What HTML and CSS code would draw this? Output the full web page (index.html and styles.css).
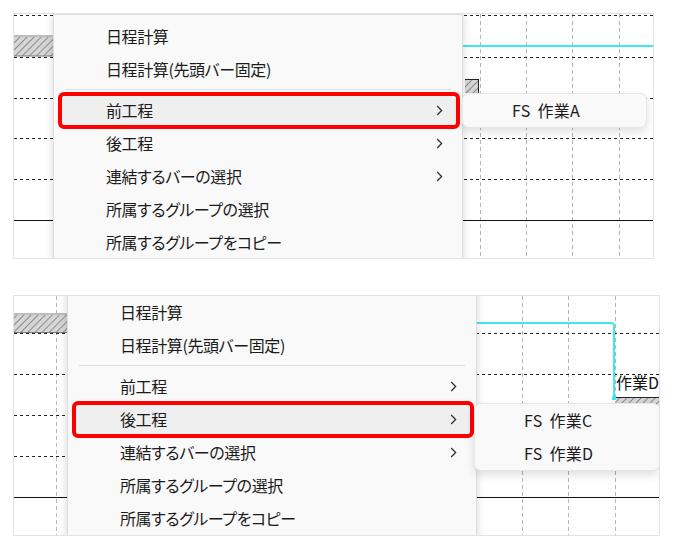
FILE: index.html
```html
<!DOCTYPE html>
<html lang="ja">
<head>
  <meta charset="UTF-8">
  <title>前工程・後工程メニュー</title>
  <link rel="stylesheet" href="styles.css">
</head>
<body>

  <!-- 1枚目: 前工程 -->
  <div class="shot shot-a">
    <svg class="chart" width="639" height="244">
      <defs>
        <pattern id="hatchA" width="5" height="5" patternUnits="userSpaceOnUse" patternTransform="rotate(45)">
          <rect width="5" height="5" fill="#d6d6d6"/>
          <line x1="0" y1="0" x2="0" y2="5" stroke="#444" stroke-width="1"/>
        </pattern>
      </defs>
      <g class="vgrid">
        <line x1="466.5" y1="0" x2="466.5" y2="244"/>
        <line x1="512.5" y1="0" x2="512.5" y2="244"/>
        <line x1="558.5" y1="0" x2="558.5" y2="244"/>
        <line x1="605.5" y1="0" x2="605.5" y2="244"/>
      </g>
      <g class="hgrid">
        <line x1="0" y1="1.5" x2="639" y2="1.5"/>
        <line x1="0" y1="43.5" x2="639" y2="43.5"/>
        <line x1="0" y1="84.5" x2="639" y2="84.5"/>
        <line x1="0" y1="124.5" x2="639" y2="124.5"/>
        <line x1="0" y1="165.5" x2="639" y2="165.5"/>
      </g>
      <line class="solid" x1="0" y1="206.5" x2="639" y2="206.5"/>
      <rect x="0" y="22" width="40" height="20" fill="url(#hatchA)"/>
      <line x1="0" y1="22" x2="40" y2="22" stroke="#bdbdbd" stroke-width="2"/>
      <line x1="0" y1="42" x2="40" y2="42" stroke="#777" stroke-width="1"/>
      <rect x="451" y="65" width="14" height="14" fill="url(#hatchA)"/>
      <line x1="451" y1="65.5" x2="465" y2="65.5" stroke="#222"/>
      <line x1="464.5" y1="65" x2="464.5" y2="79" stroke="#222"/>
      <line class="link" x1="440" y1="32" x2="639" y2="32"/>
    </svg>

    <div class="menu">
      <div class="item">日程計算</div>
      <div class="item">日程計算(先頭バー固定)</div>
      <div class="sep"></div>
      <div class="item has-sub active">前工程
        <svg class="chev" width="7" height="11" viewBox="0 0 7 11"><path d="M1.2 1 L5.6 5.5 L1.2 10"/></svg>
      </div>
      <div class="item has-sub">後工程
        <svg class="chev" width="7" height="11" viewBox="0 0 7 11"><path d="M1.2 1 L5.6 5.5 L1.2 10"/></svg>
      </div>
      <div class="item has-sub">連結するバーの選択
        <svg class="chev" width="7" height="11" viewBox="0 0 7 11"><path d="M1.2 1 L5.6 5.5 L1.2 10"/></svg>
      </div>
      <div class="item">所属するグループの選択</div>
      <div class="item">所属するグループをコピー</div>
    </div>

    <div class="submenu">
      <div class="item">FS 作業A</div>
    </div>
  </div>

  <!-- 2枚目: 後工程 -->
  <div class="shot shot-b">
    <svg class="chart" width="645" height="239">
      <defs>
        <pattern id="hatchB" width="5" height="5" patternUnits="userSpaceOnUse" patternTransform="rotate(45)">
          <rect width="5" height="5" fill="#d6d6d6"/>
          <line x1="0" y1="0" x2="0" y2="5" stroke="#444" stroke-width="1"/>
        </pattern>
      </defs>
      <g class="vgrid">
        <line x1="42.5" y1="0" x2="42.5" y2="239"/>
        <line x1="508.5" y1="0" x2="508.5" y2="239"/>
        <line x1="554.5" y1="0" x2="554.5" y2="239"/>
        <line x1="601.5" y1="0" x2="601.5" y2="239"/>
      </g>
      <g class="hgrid">
        <line x1="0" y1="37.5" x2="645" y2="37.5"/>
        <line x1="0" y1="78.5" x2="645" y2="78.5"/>
        <line x1="0" y1="119.5" x2="645" y2="119.5"/>
        <line x1="0" y1="160.5" x2="645" y2="160.5"/>
      </g>
      <line class="solid" x1="0" y1="201.5" x2="645" y2="201.5"/>
      <rect x="0" y="18" width="54" height="19" fill="url(#hatchB)"/>
      <line x1="0" y1="18" x2="54" y2="18" stroke="#bdbdbd" stroke-width="2"/>
      <line x1="0" y1="36.5" x2="54" y2="36.5" stroke="#777" stroke-width="1"/>
      <rect x="602" y="101" width="43" height="8" fill="url(#hatchB)"/>
      <line x1="602" y1="101.5" x2="645" y2="101.5" stroke="#222"/>
      <path class="link" d="M440 27 H597 Q600 27 600 30 V102"/>
      <rect x="598" y="100" width="4" height="4" fill="#3ee8f0"/>
    </svg>
    <span class="bar-label">作業D</span>

    <div class="menu">
      <div class="item">日程計算</div>
      <div class="item">日程計算(先頭バー固定)</div>
      <div class="sep"></div>
      <div class="item has-sub">前工程
        <svg class="chev" width="7" height="11" viewBox="0 0 7 11"><path d="M1.2 1 L5.6 5.5 L1.2 10"/></svg>
      </div>
      <div class="item has-sub active">後工程
        <svg class="chev" width="7" height="11" viewBox="0 0 7 11"><path d="M1.2 1 L5.6 5.5 L1.2 10"/></svg>
      </div>
      <div class="item has-sub">連結するバーの選択
        <svg class="chev" width="7" height="11" viewBox="0 0 7 11"><path d="M1.2 1 L5.6 5.5 L1.2 10"/></svg>
      </div>
      <div class="item">所属するグループの選択</div>
      <div class="item">所属するグループをコピー</div>
    </div>

    <div class="submenu">
      <div class="item">FS 作業C</div>
      <div class="item">FS 作業D</div>
    </div>
  </div>

</body>
</html>
```

FILE: styles.css
```css
body {
  margin: 0;
  padding: 13px 0 0 13px;
  background: #fff;
  font-family: "Noto Sans CJK JP", "Noto Sans", sans-serif;
  color: #1b1b1b;
}

.shot {
  position: relative;
  box-sizing: border-box;
  border: 1px solid #e3e3e3;
  background: #fff;
  overflow: hidden;
}

.shot-a {
  width: 641px;
  height: 246px;
  margin-bottom: 36px;
}

.shot-b {
  width: 647px;
  height: 241px;
}

.chart {
  display: block;
}

.vgrid line {
  stroke: #b5b5b5;
  stroke-width: 1;
  stroke-dasharray: 4 3;
}

.hgrid line {
  stroke: #222;
  stroke-width: 1;
  stroke-dasharray: 3 3;
}

.solid {
  stroke: #111;
  stroke-width: 1;
}

.link {
  fill: none;
  stroke: #3ee8f0;
  stroke-width: 2;
}

.bar-label {
  position: absolute;
  left: 602px;
  top: 75px;
  font-size: 16px;
  line-height: 22px;
  color: #111;
  white-space: nowrap;
  font-feature-settings: "palt";
}

/* context menu */
.menu {
  position: absolute;
  box-sizing: border-box;
  width: 410px;
  padding: 5px 0;
  background: #f9f9f9;
  border: 1px solid #dedede;
  box-shadow: 0 0 8px rgba(0, 0, 0, 0.16);
}

.shot-a .menu {
  left: 39px;
  top: 0;
}

.shot-b .menu {
  left: 53px;
  top: -6px;
}

.item {
  display: flex;
  align-items: center;
  justify-content: space-between;
  box-sizing: border-box;
  height: 33px;
  padding: 0 15px 2px 46px;
  font-size: 16px;
  letter-spacing: -0.4px;
  font-feature-settings: "palt";
  white-space: nowrap;
}

.menu .item {
  margin: 0 4px 0 6px;
  border-radius: 4px;
}

.menu .item.active {
  background: #efefef;
  outline: 4px solid #ff0000;
  outline-offset: -2px;
}

.sep {
  height: 1px;
  margin: 3px 11px 4px;
  background: #dddddd;
}

.chev {
  fill: none;
  stroke: #333;
  stroke-width: 1.3;
  margin-top: 2px;
}

.submenu {
  position: absolute;
  box-sizing: border-box;
  background: #f9f9f9;
  border: 1px solid #e6e6e6;
  border-radius: 7px;
  box-shadow: 0 4px 10px rgba(0, 0, 0, 0.13);
}

.submenu .item {
  padding: 0 0 2px 49px;
  letter-spacing: 0.3px;
  word-spacing: 3px;
}

.shot-a .submenu {
  left: 448px;
  top: 79px;
  width: 185px;
}

.shot-b .submenu {
  left: 460px;
  top: 107px;
  width: 186px;
}
```
